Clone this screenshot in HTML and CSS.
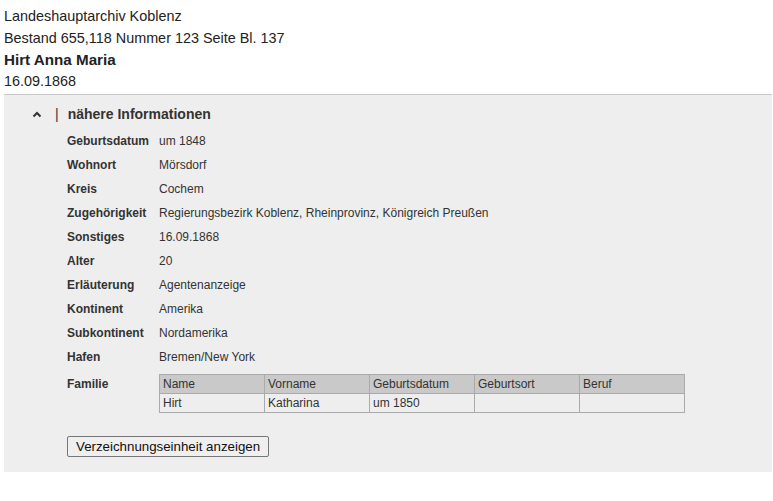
FILE: index.html
```html
<!DOCTYPE html>
<html lang="de">
<head>
    <meta charset="UTF-8">
    <title>Hirt Anna Maria</title>
    <link rel="stylesheet" href="styles.css">
</head>
<body>
    <div class="head">
        <div>Landeshauptarchiv Koblenz</div>
        <div>Bestand 655,118 Nummer 123 Seite Bl. 137</div>
        <div class="name">Hirt Anna Maria</div>
        <div>16.09.1868</div>
    </div>

    <div class="details">
        <div class="toggle">
            <span class="chevron">
                <svg width="10" height="7" viewBox="0 0 10 7"><path d="M1.5 5.5 L5 2 L8.5 5.5" fill="none" stroke="#333" stroke-width="2"/></svg>
            </span>
            <span class="bar">|</span>
            <span class="title">nähere Informationen</span>
        </div>

        <div class="fields">
            <div class="label">Geburtsdatum</div><div>um 1848</div>
            <div class="label">Wohnort</div><div>Mörsdorf</div>
            <div class="label">Kreis</div><div>Cochem</div>
            <div class="label">Zugehörigkeit</div><div>Regierungsbezirk Koblenz, Rheinprovinz, Königreich Preußen</div>
            <div class="label">Sonstiges</div><div>16.09.1868</div>
            <div class="label">Alter</div><div>20</div>
            <div class="label">Erläuterung</div><div>Agentenanzeige</div>
            <div class="label">Kontinent</div><div>Amerika</div>
            <div class="label">Subkontinent</div><div>Nordamerika</div>
            <div class="label">Hafen</div><div>Bremen/New York</div>
            <div class="label family">Familie</div>
            <div class="family">
                <table class="family-table">
                    <tr><th>Name</th><th>Vorname</th><th>Geburtsdatum</th><th>Geburtsort</th><th>Beruf</th></tr>
                    <tr><td>Hirt</td><td>Katharina</td><td>um 1850</td><td></td><td></td></tr>
                </table>
            </div>
        </div>

        <button class="show">Verzeichnungseinheit anzeigen</button>
    </div>
</body>
</html>
```

FILE: styles.css
```css
body {
    margin: 6px 1px 0 4px;
    font-family: "Liberation Sans", Arial, sans-serif;
    font-size: 14px;
    color: #222;
    background: #fff;
}
.head div {
    font-size: 14.4px;
    line-height: 21.5px;
}
.head .name {
    font-weight: bold;
    font-size: 15.2px;
}
.details {
    margin-top: 2px;
    background: #eeeeee;
    border-top: 1px solid #c8c8c8;
    padding: 10px 0 15px 63px;
    color: #333;
}
.toggle {
    display: flex;
    align-items: center;
    height: 18px;
    font-size: 14px;
    font-weight: bold;
    margin-left: -31px;
}
.chevron {
    width: 10px;
    display: flex;
    margin-left: -4px;
    margin-right: 13px;
}
.bar {
    font-weight: normal;
    margin-right: 9px;
}
.fields {
    display: grid;
    grid-template-columns: 92px 1fr;
    grid-auto-rows: 24px;
    align-items: center;
    font-size: 12px;
    margin-top: 6px;
}
.label {
    font-weight: bold;
}
.family {
    align-self: start;
    margin-top: 5px;
    height: 50px;
}
.label.family {
    margin-top: 8px;
}
.fields div.family {
    grid-row: span 2;
}
.family-table {
    border-collapse: collapse;
    width: 526px;
    font-size: 12px;
}
.family-table th,
.family-table td {
    border: 1px solid #aaa;
    text-align: left;
    font-weight: normal;
    padding: 1px 3px;
    height: 16px;
    width: 20%;
}
.family-table th {
    background: #c9c9c9;
}
.show {
    margin-top: 19px;
    font-family: "Liberation Sans", Arial, sans-serif;
    font-size: 13.3px;
    color: #111;
    background: #efefef;
    border: 1px solid #767676;
    border-radius: 2px;
    padding: 1px 8px;
    height: 21px;
}
```
